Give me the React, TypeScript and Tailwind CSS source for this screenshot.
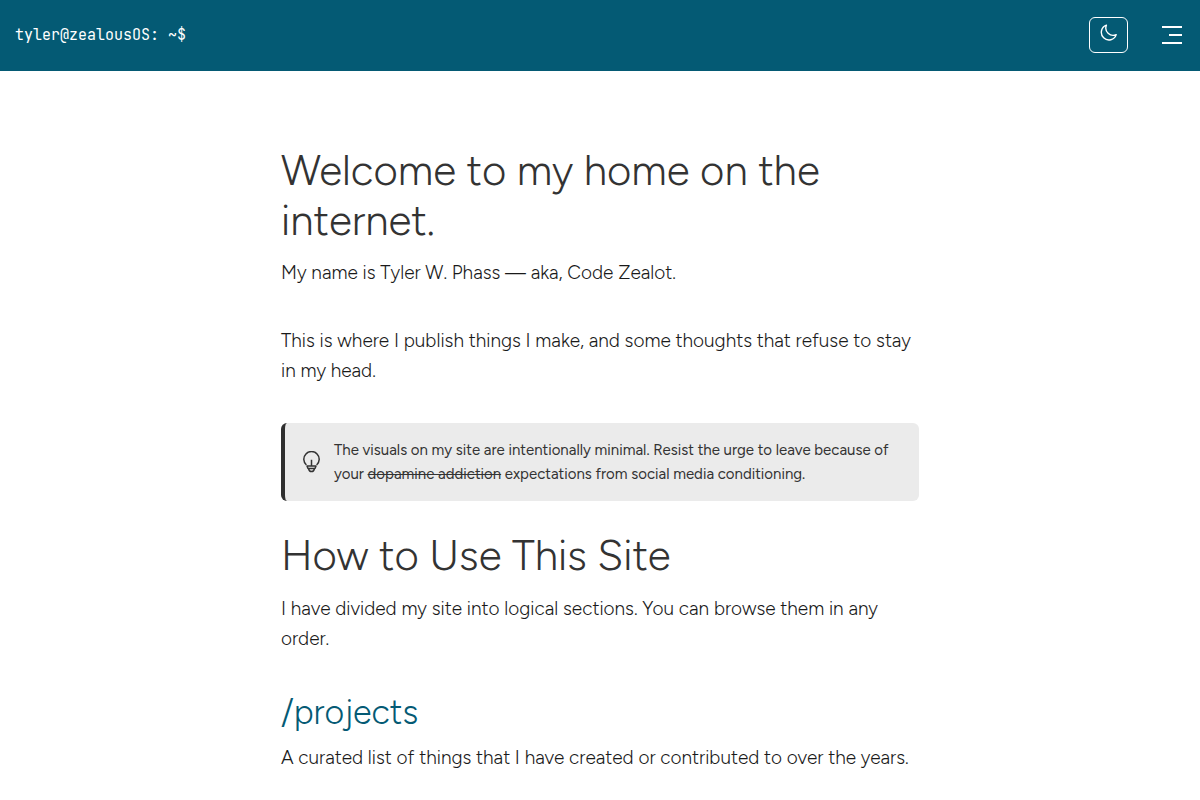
const MoonIcon = () => (
  <svg viewBox="0 0 18 18" className="size-[18px]" fill="none" stroke="currentColor" strokeWidth="1.4" strokeLinejoin="round" aria-hidden="true">
    <path d="M6.4 1.2A7.6 7.6 0 1 0 16.2 10.6A7.3 7.3 0 0 1 6.4 1.2Z" />
  </svg>
);

const MenuIcon = () => (
  <svg viewBox="0 0 20 18" className="w-5 h-[18px]" fill="none" stroke="currentColor" strokeWidth="2" aria-hidden="true">
    <path d="M0 1h20M7 9h13M0 17h20" />
  </svg>
);

const BulbIcon = () => (
  <svg viewBox="0 0 18 22" className="w-[18px] h-[22px] shrink-0" fill="none" stroke="currentColor" strokeWidth="1.5" strokeLinejoin="round" aria-hidden="true">
    <path d="M3.4 14A7.7 7.7 0 1 1 13.6 14" />
    <path d="M8.5 8.8v6.2M4 15h9l-1 2.6H5z" />
    <path d="M5.6 17.6c.3 2 1.3 3 2.9 3s2.6-1 2.9-3" />
  </svg>
);

const Header = () => {
  return (
    <header className="flex items-center justify-between h-[71px] px-[15px] pb-0.5 bg-[#045a74] text-white">
      <a href="/" className="font-['JetBrains_Mono','DejaVu_Sans_Mono',monospace] text-[15px] leading-6 font-normal">
        tyler@zealousOS: ~$
      </a>
      <div className="flex items-center gap-[31px]">
        <button
          type="button"
          aria-label="Toggle dark mode"
          className="flex items-center justify-center w-[39px] h-9 pb-1 rounded-md border border-white"
        >
          <MoonIcon />
        </button>
        <button type="button" aria-label="Open menu" className="flex items-center justify-center h-9 w-[26px]">
          <MenuIcon />
        </button>
      </div>
    </header>
  );
};

const Callout = () => {
  return (
    <aside className="flex items-center gap-[13px] mt-[37px] py-[15px] pl-[18px] pr-4 rounded-md border-l-4 border-[#2f2f2f] bg-[#ebebeb] text-[#333333]">
      <BulbIcon />
      <p className="text-[15px] leading-6 font-normal">
        The visuals on my site are intentionally minimal. Resist the urge to leave because of your{" "}
        <s>dopamine addiction</s> expectations from social media conditioning.
      </p>
    </aside>
  );
};

const App = () => {
  return (
    <div className="min-h-screen bg-white text-[#1a1a1a] font-light font-['Figtree','Inter',sans-serif]">
      <Header />
      <main className="px-4">
        <div className="max-w-[638px] mx-auto pt-[75px] pb-10 text-[19px] leading-[30px]">
          <h1 className="text-[42px] leading-[50px] font-light text-[#333333]">Welcome to my home on the internet.</h1>
          <p className="mt-3">My name is Tyler W. Phass — aka, Code Zealot.</p>
          <p className="mt-[38px]">
            This is where I publish things I make, and some thoughts that refuse to stay in my head.
          </p>
          <Callout />
          <h2 className="mt-[30px] text-[42px] leading-[50px] font-light text-[#333333]">How to Use This Site</h2>
          <p className="mt-[13px]">I have divided my site into logical sections. You can browse them in any order.</p>
          <h3 className="mt-[38px] text-[34px] leading-[42px] font-light text-[#045a74]">
            <a href="/projects">/projects</a>
          </h3>
          <p className="mt-[9px]">A curated list of things that I have created or contributed to over the years.</p>
        </div>
      </main>
    </div>
  );
};

export default App;
